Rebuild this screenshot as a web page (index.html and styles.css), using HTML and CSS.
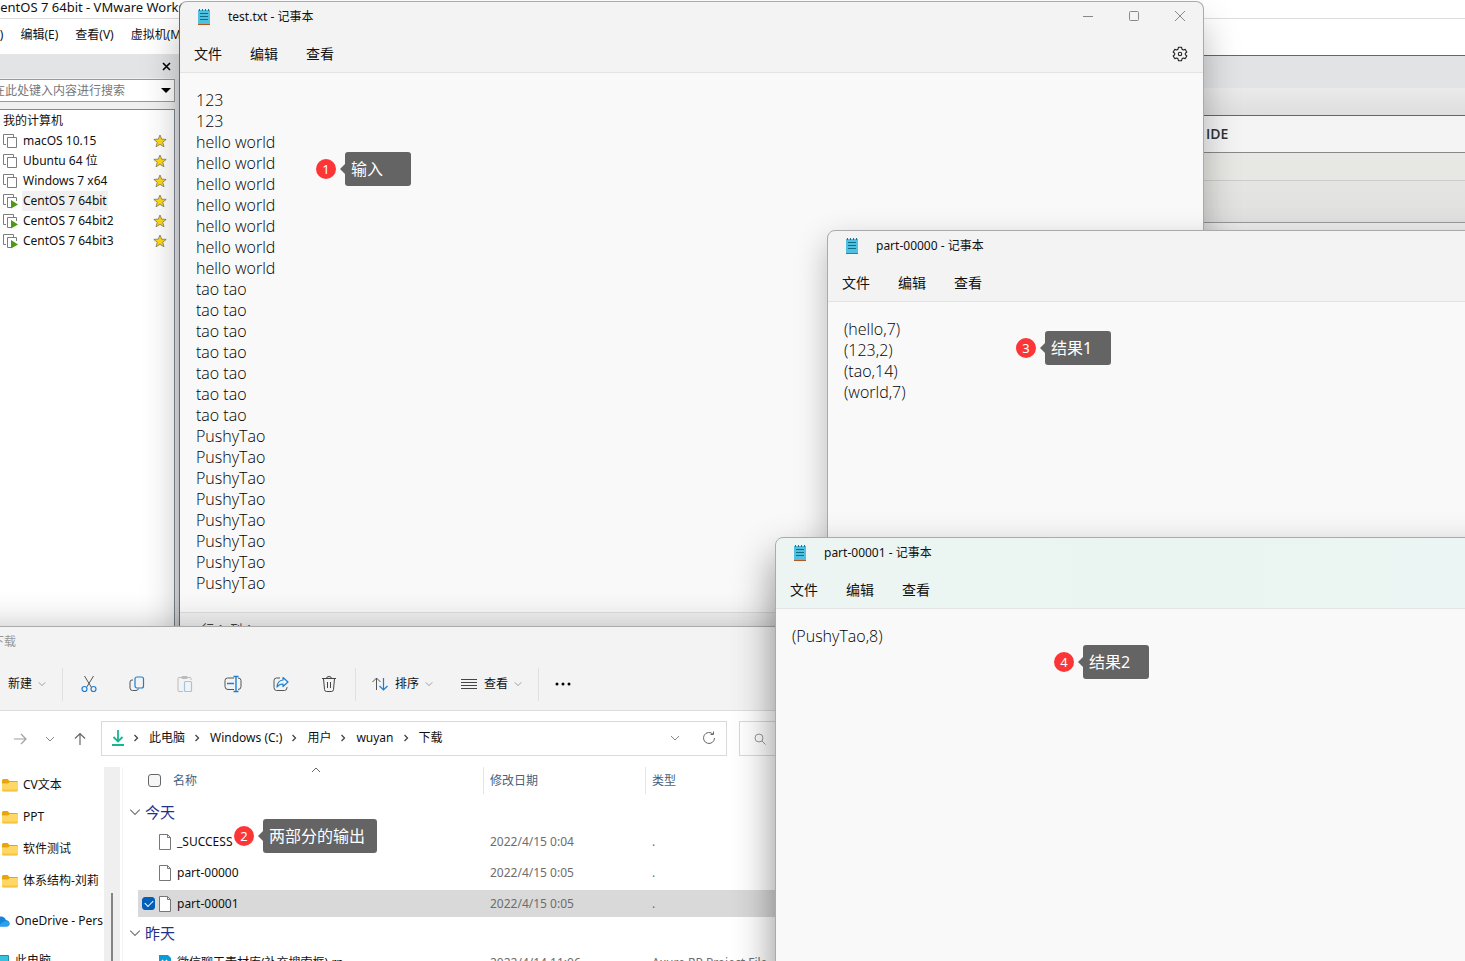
FILE: index.html
```html
<!DOCTYPE html>
<html lang="zh-CN">
<head>
<meta charset="utf-8">
<title>Desktop</title>
<link rel="stylesheet" href="styles.css">
</head>
<body>
<svg class="sprite" aria-hidden="true">
  <symbol id="i-note" viewBox="0 0 14 18">
    <path d="M1 16h11l1-1v2H1z" fill="#b3541a"/>
    <path d="M1 2h12v13l-1 1H1z" fill="#4fc0e0"/>
    <path d="M2.500 1v2M5.500 1v2M8.500 1v2M11.500 1v2" stroke="#1d6f8f"/>
    <path d="M3 5.500h8M3 8.500h8M3 11.500h8" stroke="#0f6d8c"/>
  </symbol>
  <symbol id="i-vm" viewBox="0 0 16 16">
    <path d="M3 11.500H.5V1.500h10V4" fill="none" stroke="#7c7c7c"/>
    <path d="M4.500 4.500h9v10h-9z" fill="#fff" stroke="#7c7c7c"/>
  </symbol>
  <symbol id="i-vmrun" viewBox="0 0 16 16">
    <path d="M3 11.500H.5V1.500h10V4" fill="none" stroke="#7c7c7c"/>
    <path d="M13.500 8V4.500h-9v10H8" fill="none" stroke="#7c7c7c"/>
    <path d="M8 7l7 4.500L8 15.500z" fill="#4a9a12"/>
  </symbol>
  <symbol id="i-star" viewBox="0 0 14 14">
    <path d="M7 1l1.700 4.200 4.500.2-3.500 2.900 1.300 4.500L7 10.300l-4 2.500 1.300-4.500L.8 5.400l4.500-.2z" fill="#ffd90f" stroke="#8c8360" stroke-width=".9"/>
  </symbol>
  <symbol id="i-folder" viewBox="0 0 18 16">
    <path d="M1 3.500Q1 2 2.500 2h4l2 2H16q1 0 1 1.500V9H1z" fill="#e9a60c"/>
    <path d="M1 6.500h6L8.500 5H16q1 0 1 1v7q0 1.500-1.500 1.500h-13Q1 14.500 1 13z" fill="#ffd766"/>
    <path d="M1 12.500q0 2 1.500 2h13q1.500 0 1.500-2z" fill="#f7c540"/>
  </symbol>
  <symbol id="i-file" viewBox="0 0 14 18">
    <path d="M1.500 1.500h8l3 3v12h-11z" fill="#fff" stroke="#777"/>
    <path d="M9.500 1.500v3h3" fill="none" stroke="#777"/>
  </symbol>
  <symbol id="i-down" viewBox="0 0 10 10"><path d="M1 3l4 4 4-4" fill="none" stroke="currentColor"/></symbol>
  <symbol id="i-sep" viewBox="0 0 10 10"><path d="M3.500 2l3 3-3 3" fill="none" stroke="#444" stroke-width="1.300"/></symbol>
</svg>
<div class="desktop">

<section class="window vmware">
  <div class="vm-title">CentOS 7 64bit - VMware Workstation</div>
  <nav class="vm-menu"><button>文件(F)</button><button>编辑(E)</button><button>查看(V)</button><button>虚拟机(M)</button></nav>
  <div class="vm-main">
    <aside class="vm-side">
      <div class="vm-head"><button aria-label="关闭"><svg width="9" height="9" viewBox="0 0 9 9"><path d="M1 1l7 7M8 1L1 8" stroke="#000" stroke-width="1.600"/></svg></button></div>
      <div class="vm-search"><input aria-label="搜索" placeholder="在此处键入内容进行搜索"><svg width="10" height="6" viewBox="0 0 10 6"><path d="M0 0h10L5 5z"/></svg></div>
      <div class="vm-list">
        <div class="vm-root">我的计算机</div>
        <ul>
          <li><svg class="i16"><use href="#i-vm"/></svg><span>macOS 10.15</span><svg class="i14"><use href="#i-star"/></svg></li>
          <li><svg class="i16"><use href="#i-vm"/></svg><span>Ubuntu 64 位</span><svg class="i14"><use href="#i-star"/></svg></li>
          <li><svg class="i16"><use href="#i-vm"/></svg><span>Windows 7 x64</span><svg class="i14"><use href="#i-star"/></svg></li>
          <li><svg class="i16"><use href="#i-vmrun"/></svg><span class="current">CentOS 7 64bit</span><svg class="i14"><use href="#i-star"/></svg></li>
          <li><svg class="i16"><use href="#i-vmrun"/></svg><span>CentOS 7 64bit2</span><svg class="i14"><use href="#i-star"/></svg></li>
          <li><svg class="i16"><use href="#i-vmrun"/></svg><span>CentOS 7 64bit3</span><svg class="i14"><use href="#i-star"/></svg></li>
        </ul>
      </div>
    </aside>
    <div class="vm-view">
      <div class="band tabs"></div>
      <div class="band shade"></div>
      <div class="band ide">IDE</div>
      <div class="band tool"></div>
      <div class="band tool2"></div>
    </div>
  </div>
</section>

<section class="window notepad np-test">
  <header class="np-title"><svg class="note"><use href="#i-note"/></svg><span>test.txt - 记事本</span>
    <div class="np-ctl">
      <button aria-label="最小化"><svg width="12" height="12" viewBox="0 0 12 12"><path d="M1 5.500h10" stroke="#888"/></svg></button>
      <button aria-label="最大化"><svg width="12" height="12" viewBox="0 0 12 12"><rect x="1.500" y=".5" width="9" height="9" rx="1" fill="none" stroke="#888"/></svg></button>
      <button aria-label="关闭"><svg width="12" height="12" viewBox="0 0 12 12"><path d="M1 0l10 10M11 0L1 10" stroke="#888"/></svg></button>
    </div>
  </header>
  <nav class="np-menu"><button>文件</button><button>编辑</button><button>查看</button>
    <button class="gear" aria-label="设置"><svg width="16" height="16" viewBox="0 0 16 16" fill="none" stroke="#222" stroke-width="1.100"><path d="M6.500 1.200h3l.5 2 1.300.8 2-.6 1.500 2.600L13.300 7.400v1.200l1.500 1.400-1.500 2.600-2-.6-1.300.8-.5 2h-3l-.5-2L4.700 12l-2 .6L1.200 10l1.500-1.400V7.400L1.200 6l1.500-2.600 2 .6L6 3.200z" stroke-linejoin="round"/><circle cx="8" cy="8" r="1.700"/></svg></button>
  </nav>
  <textarea class="np-text" rows="24" aria-label="test.txt" spellcheck="false">123
123
hello world
hello world
hello world
hello world
hello world
hello world
hello world
tao tao
tao tao
tao tao
tao tao
tao tao
tao tao
tao tao
PushyTao
PushyTao
PushyTao
PushyTao
PushyTao
PushyTao
PushyTao
PushyTao</textarea>
  <footer class="np-status">行 1, 列 1</footer>
</section>

<section class="window notepad np-zero">
  <header class="np-title"><svg class="note"><use href="#i-note"/></svg><span>part-00000 - 记事本</span></header>
  <nav class="np-menu"><button>文件</button><button>编辑</button><button>查看</button></nav>
  <textarea class="np-text" rows="16" aria-label="part-00000" spellcheck="false">(hello,7)
(123,2)
(tao,14)
(world,7)</textarea>
</section>

<section class="window explorer">
  <header class="ex-title">下载</header>
  <div class="ex-tools">
    <button class="new">新建<svg class="i8"><use href="#i-down"/></svg></button>
    <i class="rule"></i>
    <div class="actions">
      <button aria-label="剪切"><svg class="i18" viewBox="0 0 18 18" fill="none"><path d="M4.500 1l6.700 11M13.500 1L6.800 12" stroke="#555"/><circle cx="4.500" cy="14" r="2.500" stroke="#1a7fd4" stroke-width="1.200"/><circle cx="13.500" cy="14" r="2.500" stroke="#1a7fd4" stroke-width="1.200"/></svg></button>
      <button aria-label="复制"><svg class="i18" viewBox="0 0 18 18" fill="none"><path d="M5 5H4Q2 5 2 7v6q0 2.500 2.500 2.500H8q2 0 2.500-2" stroke="#555"/><rect x="7" y="2" width="8.500" height="11" rx="2" stroke="#1a7fd4" stroke-width="1.200"/></svg></button>
      <button aria-label="粘贴"><svg class="i18" viewBox="0 0 18 18" fill="none"><path d="M7 16.500H3q-1 0-1-1v-12q0-1 1-1h11q1 0 1 1V5M6 1.500h5v2H6z" stroke="#bbb"/><rect x="8.500" y="6.500" width="7" height="10" rx="1" stroke="#9cc6e8" stroke-width="1.200"/></svg></button>
      <button aria-label="重命名"><svg class="i18" viewBox="0 0 18 18" fill="none"><path d="M10 3H3.500Q1 3 1 5.500v6Q1 14.500 4 14.500h6M14 3q3 0 3 2.500v6q0 3-3 3" stroke="#555"/><path d="M3 8.500h7M9.500 1.500h5M12 1.500v15M9.500 16.500h5" stroke="#1a7fd4" stroke-width="1.400"/></svg></button>
      <button aria-label="共享"><svg class="i18" viewBox="0 0 18 18" fill="none"><path d="M8 3H4.500Q2 3 2 5.500v7Q2 15.500 4.500 15.500h8q2.500 0 2.500-3V12" stroke="#555"/><path d="M11 2.500L16 7l-5 4.500V9q-3.500-.2-6 3 .5-6.500 6-7z" stroke="#1a7fd4" stroke-width="1.200" stroke-linejoin="round"/></svg></button>
      <button aria-label="删除"><svg class="i18" viewBox="0 0 18 18" fill="none" stroke="#444"><path d="M2 3.500h14M6.500 3.500q0-2 2.500-2t2.500 2M3.500 3.500l1 11q.2 2 2 2h5q1.800 0 2-2l1-11M7.500 7v6M10.500 7v6"/></svg></button>
    </div>
    <i class="rule"></i>
    <button class="sort"><svg class="i18" viewBox="0 0 18 18" fill="none"><path d="M5.500 15V3M1.500 7l4-4 4 4" stroke="#555"/><path d="M12.500 3v12M8.500 11l4 4 4-4" stroke="#1a7fd4" stroke-width="1.200"/></svg>排序<svg class="i8"><use href="#i-down"/></svg></button>
    <button class="view"><svg class="i18" viewBox="0 0 18 18"><path d="M1 4.500h16M1 7.500h16M1 10.500h16M1 13.500h16" stroke="#444"/></svg>查看<svg class="i8"><use href="#i-down"/></svg></button>
    <i class="rule"></i>
    <button class="more" aria-label="更多"><svg width="18" height="4" viewBox="0 0 18 4"><circle cx="3" cy="2" r="1.500"/><circle cx="9" cy="2" r="1.500"/><circle cx="15" cy="2" r="1.500"/></svg></button>
  </div>
  <div class="ex-nav">
    <div class="arrows">
      <button aria-label="前进"><svg width="14" height="14" viewBox="0 0 14 14" fill="none" stroke="#a0a0a0" stroke-width="1.200"><path d="M1 7h12M8 2l5 5-5 5"/></svg></button>
      <button aria-label="最近"><svg class="i10"><use href="#i-down"/></svg></button>
      <button aria-label="向上"><svg width="14" height="14" viewBox="0 0 14 14" fill="none" stroke="#666" stroke-width="1.200"><path d="M7 13V1.500M2 6.500l5-5 5 5"/></svg></button>
    </div>
    <div class="address">
      <svg class="dl" width="14" height="16" viewBox="0 0 14 16" fill="none" stroke="#16b58f" stroke-width="1.800"><path d="M7 0v11M2.500 7L7 11.500 11.500 7M1 15h12"/></svg>
      <svg class="i10"><use href="#i-sep"/></svg><a href="#">此电脑</a>
      <svg class="i10"><use href="#i-sep"/></svg><a href="#">Windows (C:)</a>
      <svg class="i10"><use href="#i-sep"/></svg><a href="#">用户</a>
      <svg class="i10"><use href="#i-sep"/></svg><a href="#">wuyan</a>
      <svg class="i10"><use href="#i-sep"/></svg><a href="#">下载</a>
      <div class="addr-end">
        <button aria-label="历史"><svg class="i10"><use href="#i-down"/></svg></button>
        <button aria-label="刷新"><svg width="14" height="14" viewBox="0 0 14 14" fill="none" stroke="#666"><path d="M12.500 7A5.500 5.500 0 1 1 11 3.200M11.500.5v3h-3"/></svg></button>
      </div>
    </div>
    <label class="ex-search"><svg width="12" height="12" viewBox="0 0 12 12" fill="none" stroke="#999"><circle cx="5" cy="5" r="4"/><path d="M8 8l3.500 3.500"/></svg><input type="search" aria-label="搜索下载"></label>
  </div>
  <div class="ex-body">
    <aside class="ex-side">
      <a href="#" class="f"><svg class="i18"><use href="#i-folder"/></svg>CV文本</a>
      <a href="#" class="f"><svg class="i18"><use href="#i-folder"/></svg>PPT</a>
      <a href="#" class="f"><svg class="i18"><use href="#i-folder"/></svg>软件测试</a>
      <a href="#" class="f"><svg class="i18"><use href="#i-folder"/></svg>体系结构-刘莉</a>
      <a href="#" class="root"><svg class="i18" viewBox="0 0 18 16"><path d="M4 13.500Q0 13 1 9.500 2 7 4.500 7 6 3 10 3.500q3 .5 4 3.500 3.500.5 3.500 3.500 0 3-3 3z" fill="#1484d6"/><path d="M4 13.500L13 8q4.500 0 4.500 2.500 0 3-3 3z" fill="#2ba0ee"/></svg>OneDrive - Personal</a>
      <a href="#" class="root"><svg class="i18" viewBox="0 0 18 16"><rect x="1" y="2" width="16" height="11" rx="1" fill="#1a8fae"/><rect x="2" y="3" width="14" height="9" fill="#38c1dc"/></svg>此电脑</a>
    </aside>
    <div class="ex-scroll"><div class="thumb"></div></div>
    <div class="ex-files">
      <svg class="i10 sorted" viewBox="0 0 10 10"><path d="M1 7l4-4 4 4" fill="none" stroke="#666"/></svg>
      <table>
        <colgroup><col class="c-gap"><col class="c-name"><col class="c-date"><col></colgroup>
        <thead><tr><th></th><th><div class="name hd"><input type="checkbox" aria-label="全选">名称</div></th><th><div class="hd">修改日期</div></th><th><div class="hd">类型</div></th></tr></thead>
        <tbody>
          <tr class="group"><td colspan="4"><div><svg class="i12"><use href="#i-down"/></svg>今天</div></td></tr>
          <tr><td></td><td><div class="name"><svg class="file"><use href="#i-file"/></svg>_SUCCESS</div></td><td>2022/4/15 0:04</td><td>.</td></tr>
          <tr><td></td><td><div class="name"><svg class="file"><use href="#i-file"/></svg>part-00000</div></td><td>2022/4/15 0:05</td><td>.</td></tr>
          <tr class="selected"><td></td><td><div class="name"><input type="checkbox" checked aria-label="part-00001"><svg class="file"><use href="#i-file"/></svg>part-00001</div></td><td>2022/4/15 0:05</td><td>.</td></tr>
          <tr class="group"><td colspan="4"><div><svg class="i12"><use href="#i-down"/></svg>昨天</div></td></tr>
          <tr><td></td><td><div class="name"><svg class="file" viewBox="0 0 14 18"><path d="M1 1h9l3 3v13H1z" fill="#0d9bd8"/><path d="M4 6l5 6M9 6l-5 6" stroke="#fff" stroke-width="1.500"/></svg>微信聊天素材库(补充搜索框).rp</div></td><td>2022/4/14 11:06</td><td>Axure RP Project File</td></tr>
        </tbody>
      </table>
    </div>
  </div>
</section>

<section class="window notepad np-one">
  <header class="np-title"><svg class="note"><use href="#i-note"/></svg><span>part-00001 - 记事本</span></header>
  <nav class="np-menu"><button>文件</button><button>编辑</button><button>查看</button></nav>
  <textarea class="np-text" rows="17" aria-label="part-00001" spellcheck="false">(PushyTao,8)</textarea>
</section>

<div class="note-tag tag1"><b>1</b><span>输入</span></div>
<div class="note-tag tag2"><b>2</b><span>两部分的输出</span></div>
<div class="note-tag tag3"><b>3</b><span>结果1</span></div>
<div class="note-tag tag4"><b>4</b><span>结果2</span></div>
</div>
</body>
</html>
```
FILE: styles.css
```css
* { box-sizing: border-box; }
body { margin: 0; font: 12px/20px "Noto Sans", "Noto Sans CJK SC", sans-serif; color: #111; }
button { border: 0; padding: 0; background: none; font: inherit; color: inherit; display: flex; align-items: center; white-space: nowrap; }
input { font: inherit; }
a { color: inherit; text-decoration: none; }
svg { flex: none; display: block; }
.sprite { position: absolute; width: 0; height: 0; }
.i8 { width: 8px; height: 8px; color: #888; }
.i10 { width: 10px; height: 10px; color: #888; }
.i12 { width: 12px; height: 12px; color: #777; }
.i14 { width: 14px; height: 14px; }
.i16 { width: 16px; height: 16px; }
.i18 { width: 18px; height: 18px; }

.desktop { position: relative; height: 100vh; overflow: hidden; background: #fff; }
.window { position: absolute; display: flex; flex-direction: column; overflow: hidden; }

/* VMware */
.vmware { top: 0; bottom: 0; left: -100px; right: 0; background: #fff; }
.vm-title { height: 19px; line-height: 14px; border-bottom: 1px solid #dcdcdc; padding-left: 92px; font-size: 13px; white-space: nowrap; }
.vm-menu { display: flex; gap: 17px; height: 35px; align-items: center; padding: 0 0 3px 66px; }
.vm-main { flex: 1; display: flex; }
.vm-side { width: 280px; display: flex; flex-direction: column; background: linear-gradient(90deg, #f0f0f0 270px, #d8dade); padding-right: 5px; }
.vm-head { height: 24px; background: #e3e4e6; display: flex; align-items: center; justify-content: flex-end; margin-right: -5px; padding-right: 9px; }
.vm-search { display: flex; align-items: center; height: 23px; margin: 1px 0 7px; border: 1px solid #999; background: #fff; padding: 0 3px 0 92px; }
.vm-search input { flex: 1; min-width: 0; border: 0; padding: 0; background: none; outline: 0; }
.vm-search input::placeholder { color: #777; }
.vm-list { flex: 1; border: 1px solid #828790; background: #fff; padding: 1px 0 0 102px; }
.vm-list ul { list-style: none; margin: 0; padding: 0; }
.vm-list li { display: flex; align-items: center; height: 20px; padding-right: 7px; }
.vm-list li span { margin-left: 3px; padding: 0 1px; white-space: nowrap; }
.vm-list li .i14 { margin-left: auto; }
.vm-list .current { background: #f0f0f0; }
.vm-view { flex: 1; display: flex; flex-direction: column; margin-top: 1px; background: #ececec; border-top: 1px solid #666; }
.tabs { height: 32px; background: #e2e3e5; }
.shade { height: 28px; background: linear-gradient(#eaeaea, #dedede); border-bottom: 1px solid #666; }
.ide { height: 37px; background: #f4f4f4; border-bottom: 1px solid #888; padding-left: 1026px; font: 600 14px/35px "Open Sans", sans-serif; color: #2d3436; }
.tool { height: 28px; background: #e7e7e4; border-bottom: 1px solid #ccc; }
.tool2 { height: 42px; background: linear-gradient(#e5e5e2, #e0e0e0); border-bottom: 1px solid #999; }

/* Notepad */
.notepad { border: 1px solid #aaa; border-radius: 8px; background: #f3f3f3; }
.np-test { top: 1px; left: 179px; right: 261px; border-left-color: #666; box-shadow: 0 24px 36px rgba(0, 0, 0, .28); }
.np-zero { top: 230px; left: 827px; right: -300px; box-shadow: 0 12px 32px rgba(0, 0, 0, .26); }
.np-one { top: 537px; left: 775px; right: -300px; background: linear-gradient(90deg, #edf5f3, #eaf5f2 350px, #ecf5f4); box-shadow: 0 20px 40px rgba(0, 0, 0, .45); }
.np-title { display: flex; align-items: center; height: 30px; margin-bottom: 4px; padding-left: 17px; }
.note { width: 14px; height: 18px; margin-right: 17px; }
.np-ctl { display: flex; gap: 34px; margin-left: auto; padding-right: 17px; }
.np-menu { display: flex; align-items: center; gap: 28px; height: 36px; padding: 0 15px 0 14px; font-size: 14px; }
.gear { margin-left: auto; }
.np-text { border: 0; border-top: 1px solid #e3e3e3; outline: 0; resize: none; margin: 0; padding: 17px 16px 18px; background: #f9f9f9; color: #000; font: 300 16px/21px "Open Sans", "Noto Sans CJK SC", sans-serif; overflow: hidden; }
.np-status { border-top: 1px solid #e0e0e0; padding: 7px 22px; color: #444; }

/* Explorer */
.explorer { top: 626px; left: -100px; right: 560px; height: 420px; background: #fff; border-top: 1px solid #aaa; box-shadow: 0 0 32px rgba(0, 0, 0, .24); }
.ex-title { height: 31px; line-height: 30px; padding-left: 92px; background: #f3f3f3; color: #999; }
.ex-tools { display: flex; align-items: center; height: 53px; padding-left: 108px; background: #f3f3f3; border-bottom: 1px solid #ddd; }
.rule { width: 1px; height: 33px; background: #e0e0e0; }
.new { gap: 6px; width: 54px; }
.actions { display: flex; gap: 30px; padding: 0 17px; }
.sort, .view { gap: 6px; }
.sort { padding-left: 15px; }
.view { padding: 0 16px 0 27px; }
.more { padding-left: 15px; }
.ex-nav { display: flex; height: 56px; padding: 10px 0 11px 113px; }
.arrows { display: flex; flex: none; align-items: center; gap: 18px; width: 88px; color: #666; }
.address { display: flex; flex: none; align-items: center; gap: 7px; width: 626px; border: 1px solid #d9d9d9; padding: 0 10px 2px 9px; white-space: nowrap; }
.address .dl { margin-right: -1px; }
.address .i10 { margin-right: 1px; }
.addr-end { display: flex; align-items: center; gap: 22px; margin-left: auto; }
.addr-end .i10 { margin: 0; }
.ex-search { display: flex; align-items: center; flex: 1; margin-left: 12px; border: 1px solid #d9d9d9; padding-left: 14px; }
.ex-search input { flex: 1; min-width: 0; border: 0; outline: 0; background: none; }
.ex-body { flex: 1; display: flex; min-height: 0; }
.ex-side { width: 204px; padding-top: 2px; display: flex; flex-direction: column; overflow: hidden; }
.ex-side a { display: flex; align-items: center; height: 32px; white-space: nowrap; flex: none; }
.ex-side .f { gap: 4px; padding-left: 101px; }
.ex-side .root { gap: 5px; padding-left: 92px; margin-top: 8px; margin-right: 1px; overflow: hidden; }
.ex-scroll { width: 19px; background: linear-gradient(90deg, #efefef 16px, #fff 16px, #fff 18px, #f3f3f3 18px); padding: 126px 0 0 7px; }
.thumb { width: 2px; height: 200px; background: #858585; }
.ex-files { position: relative; flex: 1; min-width: 0; }
.sorted { position: absolute; left: 188px; top: -2px; }
table { width: 100%; table-layout: fixed; border-spacing: 0; }
.c-gap { width: 15px; }
.c-name { width: 345px; }
.c-date { width: 162px; }
th { height: 31px; padding: 0; font-weight: 400; text-align: left; color: #4c607a; vertical-align: top; }
.hd { height: 27px; line-height: 27px; border-left: 1px solid #e5e5e5; padding-left: 6px; }
.name { display: flex; align-items: center; gap: 5px; padding-left: 20px; color: #111; white-space: nowrap; }
.name.hd { border: 0; padding-left: 10px; gap: 12px; color: #4c607a; }
td { height: 31px; padding: 0 0 0 7px; color: #6d6d6d; border: solid transparent; border-width: 2px 0; background-clip: padding-box; white-space: nowrap; }
td:first-child, td:nth-child(2) { padding-left: 0; }
.file { width: 14px; height: 18px; }
.selected td:not(:first-child) { background-color: #d9d9d9; }
.selected .name { padding-left: 4px; gap: 3px; }
.selected .file { margin-right: 2px; }
.group td { height: 28px; font-size: 15px; color: #1f3288; }
.group div { display: flex; align-items: center; gap: 4px; padding-left: 6px; }
input[type="checkbox"] { appearance: none; width: 13px; height: 13px; margin: 0; border: 1px solid #666; border-radius: 3px; background: #f6f6f6; }
input[type="checkbox"]:checked { border-color: #005fb8; background: #005fb8; display: grid; place-items: center; }
input[type="checkbox"]:checked::after { content: ""; width: 7px; height: 4px; border: solid #fff; border-width: 0 0 1px 1px; transform: rotate(-45deg); margin-bottom: 2px; }

/* Annotations */
.note-tag { position: absolute; display: flex; align-items: center; gap: 9px; color: #fff; }
.note-tag b { width: 20px; height: 20px; border-radius: 50%; background: #fc3636; font: 13px/20px "Noto Sans", sans-serif; text-align: center; }
.note-tag span { position: relative; min-width: 66px; height: 34px; padding: 0 12px 0 6px; border-radius: 3px; background: #646464; font-size: 16px; line-height: 35px; }
.note-tag span::before { content: ""; position: absolute; left: -5px; top: 12px; border: solid transparent; border-width: 5px 5px 5px 0; border-right-color: #646464; }
.tag1 { left: 316px; top: 152px; }
.tag2 { left: 234px; top: 819px; }
.tag3 { left: 1016px; top: 331px; }
.tag4 { left: 1054px; top: 645px; }
```
